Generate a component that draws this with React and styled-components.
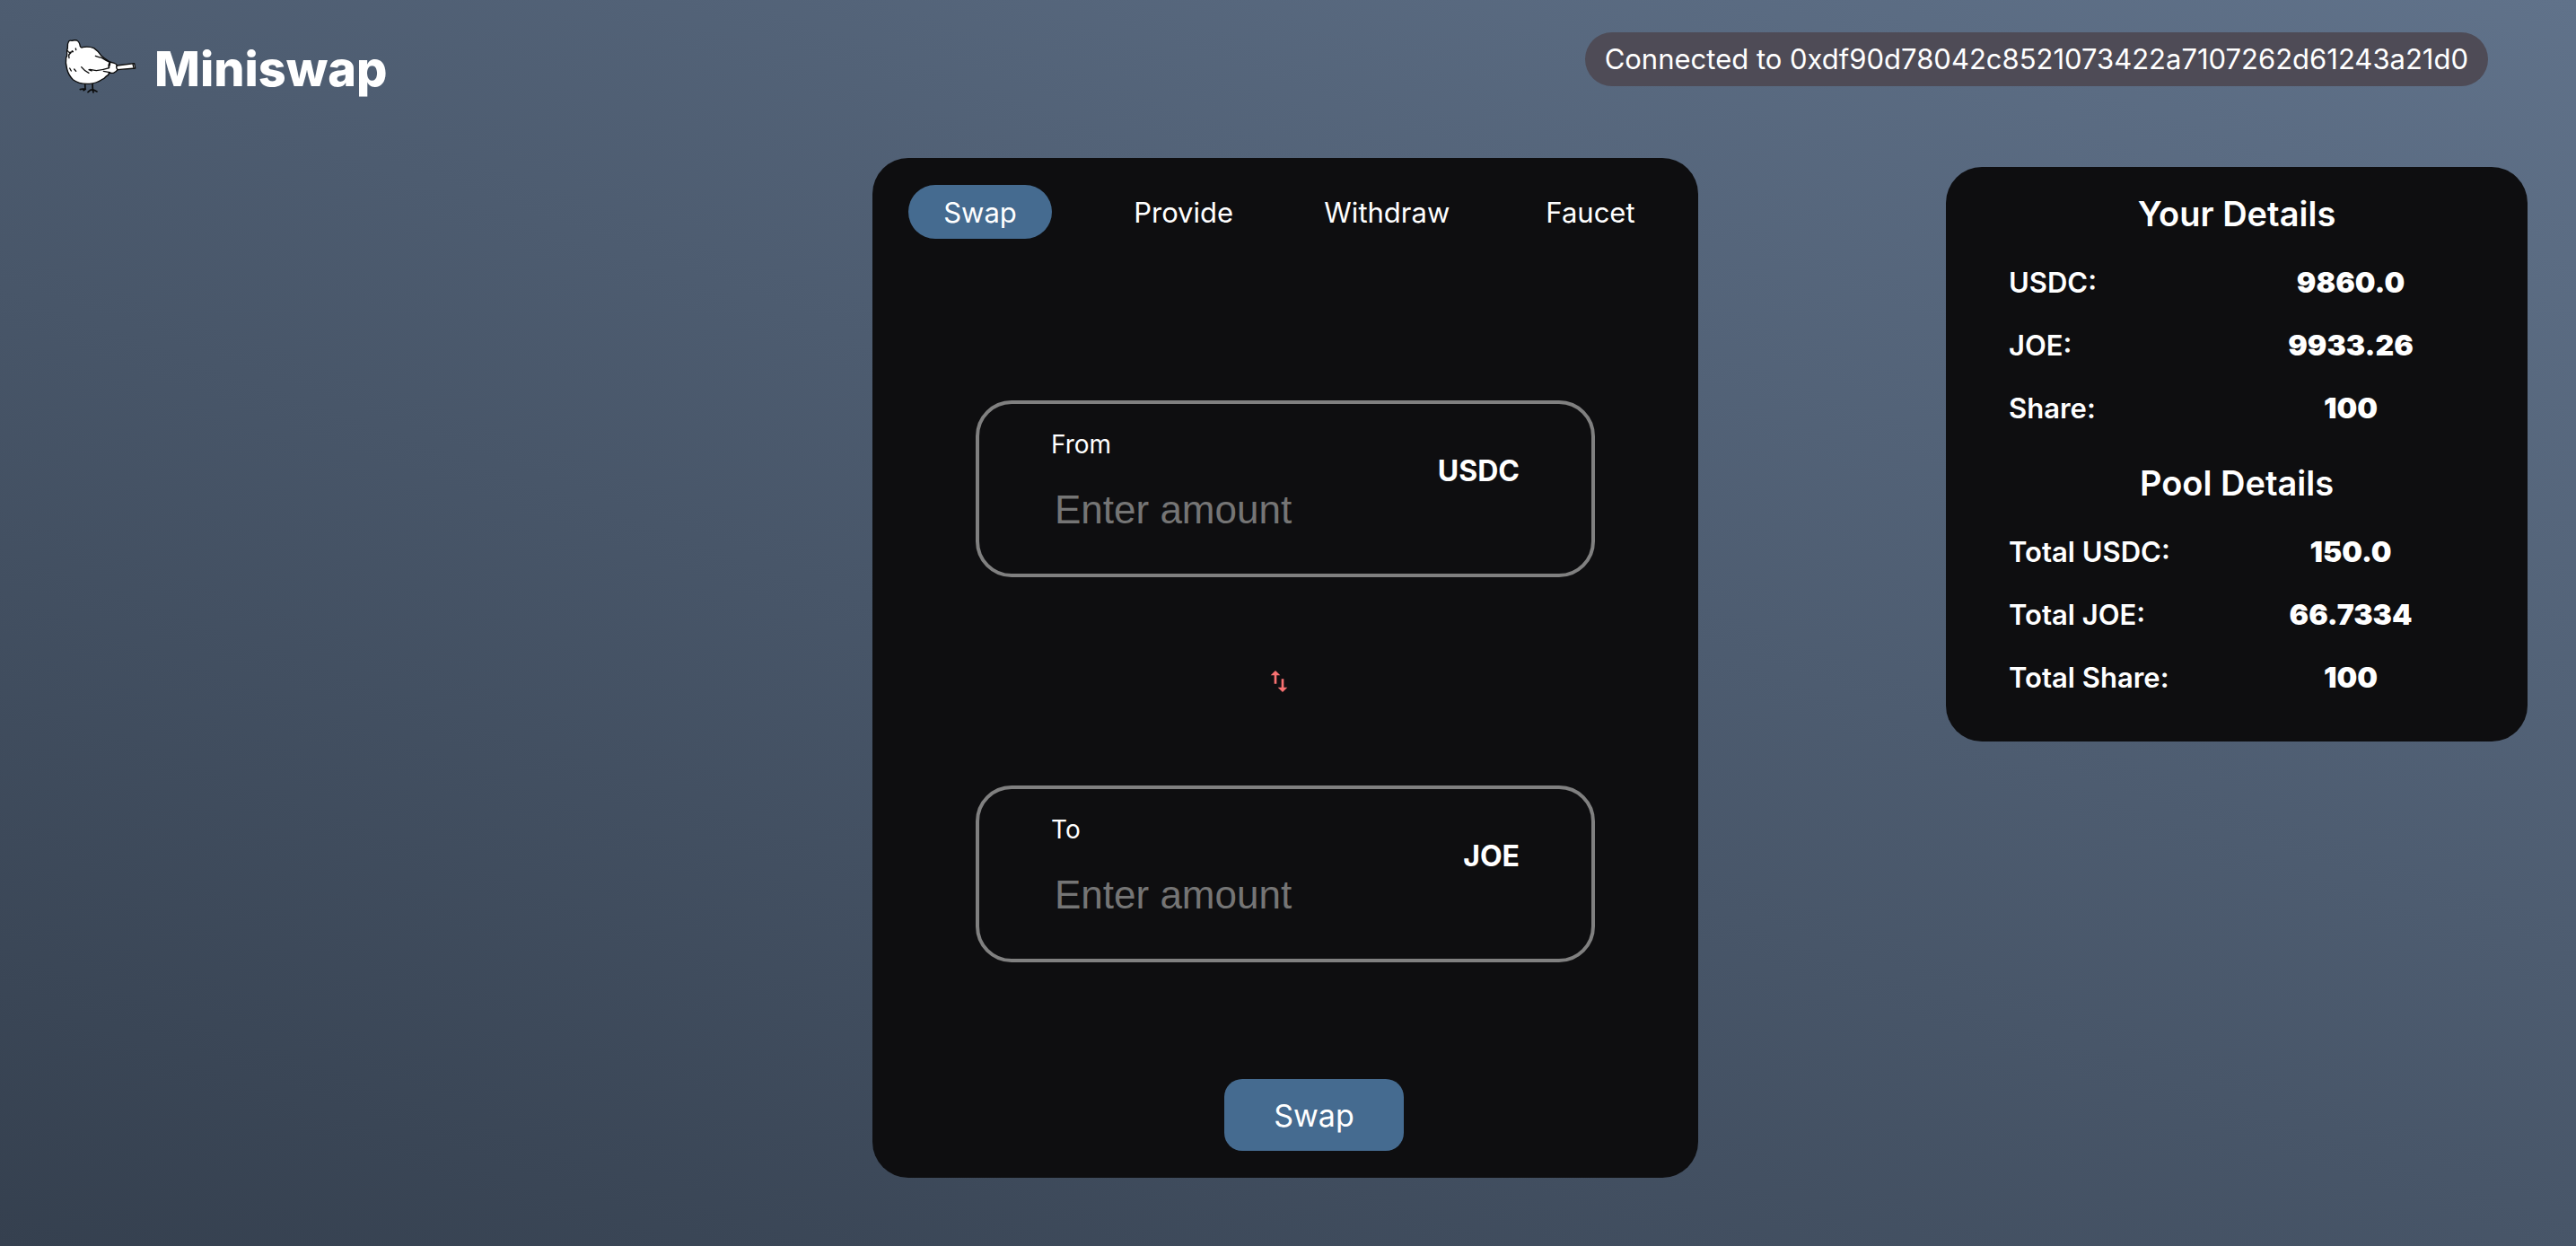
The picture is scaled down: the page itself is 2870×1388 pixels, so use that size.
import React, { useState } from "react";
import styled, { createGlobalStyle } from "styled-components";

const GlobalStyle = createGlobalStyle`
  *, *::before, *::after { box-sizing: border-box; }
  body {
    margin: 0;
    color: #ffffff;
    font-family: Inter, "Liberation Sans", sans-serif;
  }
  button, input { font-family: inherit; color: inherit; }
`;

const Page = styled.div`
  min-height: 100vh;
  background: linear-gradient(20deg, #35404f 0%, #60728a 100%);
`;

const Header = styled.header`
  display: flex;
  justify-content: space-between;
  align-items: flex-start;
  padding: 36px 98px 58px 71px;
`;

const Brand = styled.div`
  display: flex;
  align-items: center;
  gap: 18px;
  height: 82px;
`;

const BrandName = styled.h1`
  margin: 0;
  font-size: 54px;
  font-weight: 800;
  line-height: 68px;
`;

const Account = styled.div`
  padding: 0 22px;
  border-radius: 30px;
  background: #4e4b56;
  font-size: 31px;
  line-height: 60px;
`;

const Main = styled.main`
  display: grid;
  grid-template-columns: 1fr 920px 1fr;
  align-items: start;
  padding: 0 54px 72px 48px;
`;

const SwapCard = styled.section`
  grid-column: 2;
  display: flex;
  flex-direction: column;
  padding: 30px 40px;
  border-radius: 40px;
  background: #0e0e10;
`;

const Tabs = styled.nav`
  display: flex;
  justify-content: space-between;
  margin-bottom: 180px;
`;

const Tab = styled.button`
  width: 160px;
  height: 60px;
  padding: 0;
  border: 0;
  border-radius: 30px;
  background: ${(p) => (p.$active ? "#456b90" : "transparent")};
  font-size: 31px;
  cursor: pointer;
`;

const Field = styled.div`
  align-self: center;
  display: flex;
  justify-content: space-between;
  width: 690px;
  max-width: 100%;
  padding: 28px 80px 45px;
  border: 4px solid #808080;
  border-radius: 40px;
`;

const FieldEntry = styled.div`
  display: flex;
  flex-direction: column;
  gap: 30px;
`;

const FieldLabel = styled.label`
  font-size: 28px;
  line-height: 34px;
`;

const AmountInput = styled.input`
  width: 380px;
  height: 52px;
  padding: 0 4px;
  border: 0;
  outline: 0;
  background: transparent;
  font-family: "Liberation Sans", Arial, sans-serif;
  font-size: 44px;
  &::placeholder { color: #757575; opacity: 1; }
`;

const Token = styled.span`
  margin-top: 28px;
  font-size: 32px;
  font-weight: 700;
  line-height: 38px;
`;

const Direction = styled.div`
  display: flex;
  justify-content: center;
  padding: 100px 14px 100px 0;
`;

const FlipButton = styled.button`
  display: flex;
  padding: 0;
  border: 0;
  background: transparent;
  color: #f87171;
  cursor: pointer;
`;

const Actions = styled.div`
  display: flex;
  justify-content: center;
  padding: 130px 0 0 64px;
`;

const SubmitButton = styled.button`
  width: 200px;
  height: 80px;
  padding: 0;
  border: 0;
  border-radius: 20px;
  background: #456b90;
  font-size: 34px;
  cursor: pointer;
`;

const DetailsCard = styled.aside`
  justify-self: end;
  width: 648px;
  max-width: 100%;
  margin-top: 10px;
  padding: 4px 70px 36px;
  border-radius: 40px;
  background: #0e0e10;
`;

const DetailsTitle = styled.h2`
  margin: 0;
  padding: 24px 0 18px;
  font-size: 38px;
  font-weight: 600;
  line-height: 48px;
  text-align: center;
`;

const DetailsTable = styled.table`
  width: 100%;
  table-layout: fixed;
  border-collapse: collapse;
  line-height: 70px;
  th, td { padding: 0; white-space: nowrap; }
  th { text-align: left; font-size: 31px; font-weight: 600; }
  td { text-align: center; font-size: 32px; font-weight: 900; }
`;

const BirdLogo = () => (
  <svg width="83" height="70" viewBox="33 33 249 210" fill="none" stroke="#0b0b0b" strokeWidth="4" strokeLinecap="round" strokeLinejoin="round" aria-hidden="true">
    <path d="M104 186 L105 205 M88 206 L97 204 L106 205 L99 209 M129 184 L130 208 M114 215 L122 208 L131 206 L144 213 M130 207 L132 216" strokeWidth="5" />
    <path fill="#ffffff" d="M50 45 Q54 41 60 43 Q68 40 77 42 Q86 47 88 62 Q92 68 96 65 Q116 61 134 68 Q148 77 159 94 Q173 106 187 114 L202 118 Q209 120 211 126 L269 119 L272 135 L213 140 Q208 148 199 151 L184 151 Q184 159 175 162 Q168 171 160 173 Q145 184 119 187 Q85 189 64 173 Q49 158 44 138 Q38 118 41 99 Q45 95 44 88 Q42 76 46 68 Q44 54 50 45 Z" />
    <path d="M139 94 Q151 98 160 100 Q174 109 187 115 Q180 126 185 134 Q160 142 142 143 L120 139 M92 131 Q103 145 117 151 M117 140 L126 144 M187 115 Q190 121 182 135 M166 145 Q180 148 188 149 M211 126 Q206 132 213 140 M264 121 L267 134" strokeWidth="4" />
    <path d="M53 135 L58 144 M68 138 L74 145 M61 77 L64 80 M73 69 L74 74" strokeWidth="4" />
    <path d="M46 77 Q51 84 54 82 L64 79 M54 83 L50 93 L51 101 M50 90 L57 83" strokeWidth="4" />
  </svg>
);

const FlipIcon = () => (
  <svg width="32" height="32" viewBox="0 0 24 24" fill="currentColor" aria-hidden="true">
    <path d="M16 17.01V10h-2v7.01h-3L15 21l4-3.99h-3zM9 3 5 6.99h3V14h2V6.99h3L9 3z" />
  </svg>
);

const TABS = ["Swap", "Provide", "Withdraw", "Faucet"];

const YOUR_DETAILS = [
  ["USDC:", "9860.0"],
  ["JOE:", "9933.26"],
  ["Share:", "100"],
];

const POOL_DETAILS = [
  ["Total USDC:", "150.0"],
  ["Total JOE:", "66.7334"],
  ["Total Share:", "100"],
];

function AmountField({ id, label, token, value, onChange }) {
  return (
    <Field>
      <FieldEntry>
        <FieldLabel htmlFor={id}>{label}</FieldLabel>
        <AmountInput
          id={id}
          type="text"
          inputMode="decimal"
          placeholder="Enter amount"
          value={value}
          onChange={(e) => onChange(e.target.value)}
        />
      </FieldEntry>
      <Token>{token}</Token>
    </Field>
  );
}

function Details({ title, rows }) {
  return (
    <>
      <DetailsTitle>{title}</DetailsTitle>
      <DetailsTable aria-label={title}>
        <tbody>
          {rows.map(([name, value]) => (
            <tr key={name}>
              <th scope="row">{name}</th>
              <td>{value}</td>
            </tr>
          ))}
        </tbody>
      </DetailsTable>
    </>
  );
}

export default function App() {
  const [tab, setTab] = useState("Swap");
  const [tokens, setTokens] = useState(["USDC", "JOE"]);
  const [from, setFrom] = useState("");
  const [to, setTo] = useState("");

  return (
    <>
      <GlobalStyle />
      <Page>
        <Header>
          <Brand>
            <BirdLogo />
            <BrandName>Miniswap</BrandName>
          </Brand>
          <Account>Connected to 0xdf90d78042c8521073422a7107262d61243a21d0</Account>
        </Header>
        <Main>
          <SwapCard>
            <Tabs>
              {TABS.map((name) => (
                <Tab key={name} type="button" $active={name === tab} onClick={() => setTab(name)}>
                  {name}
                </Tab>
              ))}
            </Tabs>
            <AmountField id="from" label="From" token={tokens[0]} value={from} onChange={setFrom} />
            <Direction>
              <FlipButton type="button" aria-label="Reverse" onClick={() => setTokens([tokens[1], tokens[0]])}>
                <FlipIcon />
              </FlipButton>
            </Direction>
            <AmountField id="to" label="To" token={tokens[1]} value={to} onChange={setTo} />
            <Actions>
              <SubmitButton type="button">Swap</SubmitButton>
            </Actions>
          </SwapCard>
          <DetailsCard>
            <Details title="Your Details" rows={YOUR_DETAILS} />
            <Details title="Pool Details" rows={POOL_DETAILS} />
          </DetailsCard>
        </Main>
      </Page>
    </>
  );
}
